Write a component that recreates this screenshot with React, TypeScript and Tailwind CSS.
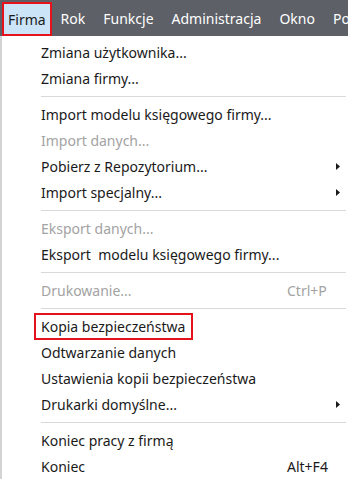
import React from "react";

type Item =
    | { kind: "sep" }
    | {
          kind: "item";
          label: string;
          disabled?: boolean;
          shortcut?: string;
          submenu?: boolean;
          marked?: boolean;
      };

const topMenu = ["Rok", "Funkcje", "Administracja", "Okno", "Pomoc"];

const items: Item[] = [
    { kind: "item", label: "Zmiana użytkownika..." },
    { kind: "item", label: "Zmiana firmy..." },
    { kind: "sep" },
    { kind: "item", label: "Import modelu księgowego firmy..." },
    { kind: "item", label: "Import danych...", disabled: true },
    { kind: "item", label: "Pobierz z Repozytorium...", submenu: true },
    { kind: "item", label: "Import specjalny...", submenu: true },
    { kind: "sep" },
    { kind: "item", label: "Eksport danych...", disabled: true },
    { kind: "item", label: "Eksport\u00a0 modelu księgowego firmy..." },
    { kind: "sep" },
    { kind: "item", label: "Drukowanie...", disabled: true, shortcut: "Ctrl+P" },
    { kind: "sep" },
    { kind: "item", label: "Kopia bezpieczeństwa", marked: true },
    { kind: "item", label: "Odtwarzanie danych" },
    { kind: "item", label: "Ustawienia kopii bezpieczeństwa" },
    { kind: "item", label: "Drukarki domyślne...", submenu: true },
    { kind: "sep" },
    { kind: "item", label: "Koniec pracy z firmą" },
    { kind: "item", label: "Koniec", shortcut: "Alt+F4" },
];

const font = { fontFamily: '"Noto Sans", "Open Sans", sans-serif' };

export default function App() {
    return (
        <div className="w-[348px] h-[479px] overflow-hidden bg-white" style={font}>
            {/* menu bar */}
            <div className="flex h-9 overflow-hidden bg-[#5d6067] text-[14px] text-white whitespace-nowrap">
                <div className="mt-[2px] ml-[2px] flex items-center border-2 border-[#e5121c] bg-[#cce4f7] px-[4px] text-[#1b1b1b]">
                    Firma
                </div>
                {topMenu.map((name) => (
                    <div key={name} className="flex items-center px-[9px]">
                        {name}
                    </div>
                ))}
            </div>

            {/* dropdown */}
            <div className="h-[443px] w-[346px] border-l-2 border-[#d4d4d4] pt-[3px] text-[14px]">
                {items.map((it, i) =>
                    it.kind === "sep" ? (
                        <div key={i} className="flex h-[10px] items-center pl-[39px]">
                            <div className="h-px w-full bg-[#d9d9d9]" />
                        </div>
                    ) : (
                        <div
                            key={i}
                            className={`relative flex h-[26px] items-center whitespace-nowrap pl-[39px] ${
                                it.disabled ? "text-[#a3a3a3]" : "text-[#1a1a1a]"
                            }`}
                        >
                            <span className="flex-1">{it.label}</span>
                            {it.shortcut && <span className="w-[59px]">{it.shortcut}</span>}
                            {it.submenu && (
                                <span className="flex w-[59px] justify-end pr-[6px]">
                                    <svg width="4" height="7" viewBox="0 0 4 7">
                                        <path d="M0 0 L4 3.5 L0 7 Z" fill="#1a1a1a" />
                                    </svg>
                                </span>
                            )}
                            {it.marked && (
                                <span className="pointer-events-none absolute left-[32px] top-0 h-[27px] w-[159px] border-2 border-[#e5121c]" />
                            )}
                        </div>
                    )
                )}
            </div>
        </div>
    );
}
